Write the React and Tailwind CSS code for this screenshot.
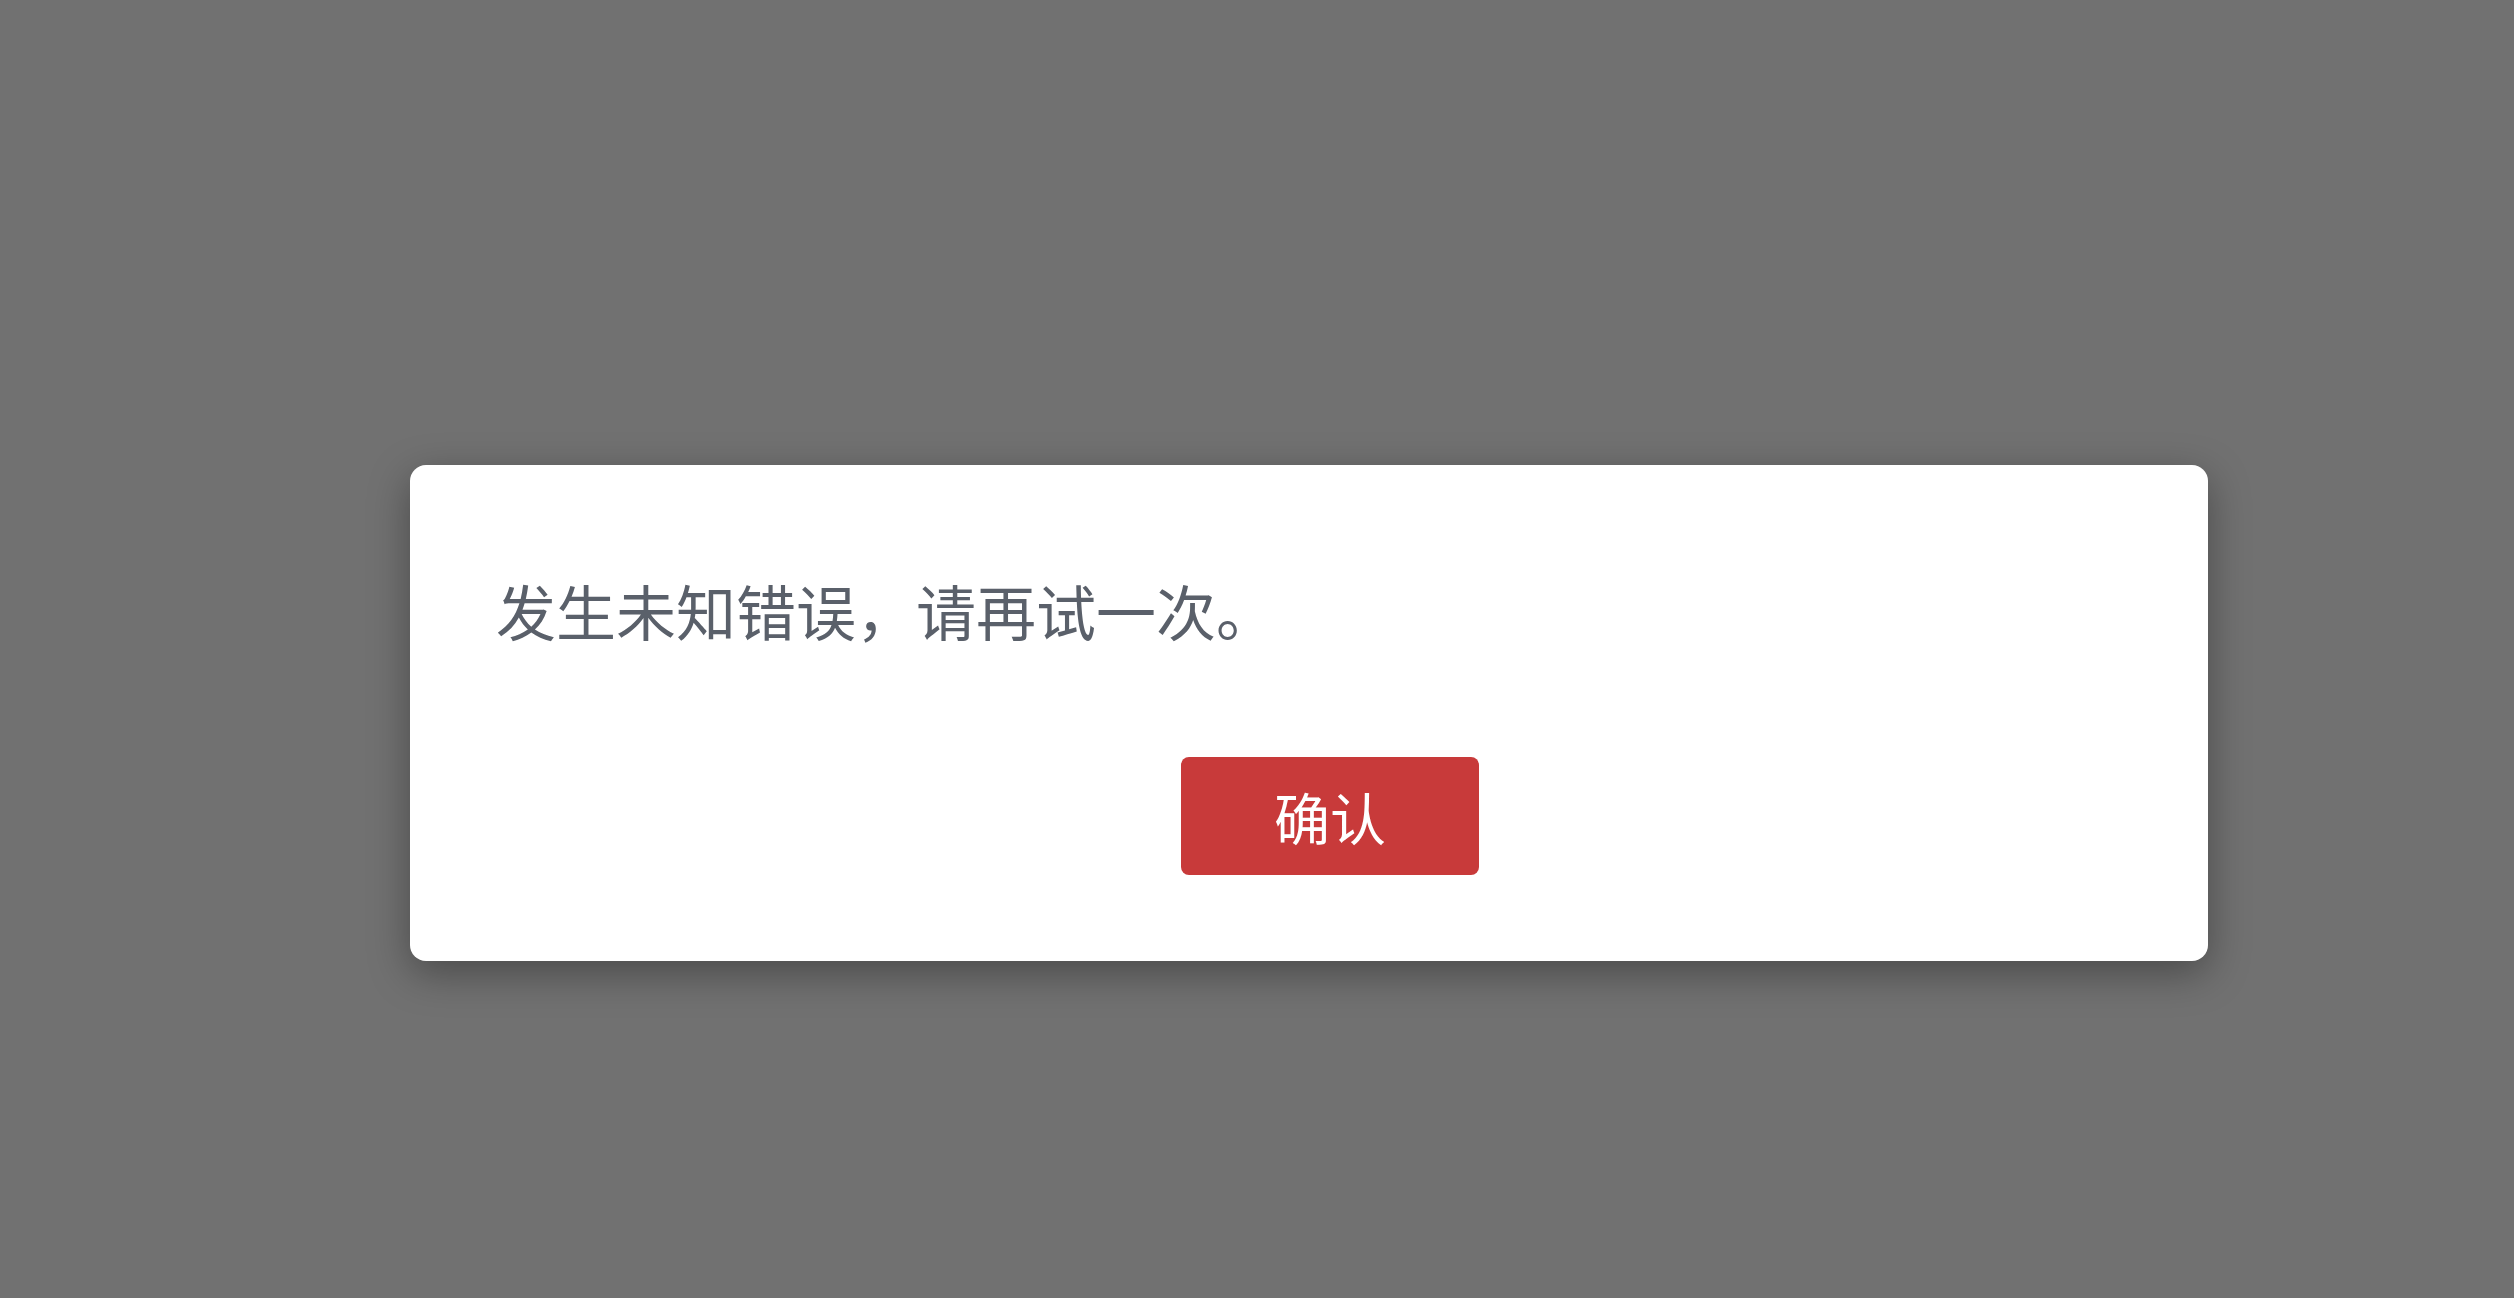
export default function App() {
  return (
    <div className="h-screen w-full overflow-hidden bg-[#717171] pl-[410px] pt-[465px] font-['Noto_Sans_CJK_SC','Noto_Sans',sans-serif]">
      <div className="flex h-[496px] w-[1798px] flex-col rounded-2xl bg-white pl-[86px] pt-[115px] shadow-[0_12px_40px_rgba(0,0,0,0.35)]">
        <p className="text-[60px] leading-[60px] text-[#5a606a]">发生未知错误，请再试一次。</p>
        <div className="mt-[117px] pl-[685px]">
          <button className="h-[118px] w-[298px] rounded-lg bg-[#c83a3a] text-[56px] leading-none text-white">
            确认
          </button>
        </div>
      </div>
    </div>
  );
}
